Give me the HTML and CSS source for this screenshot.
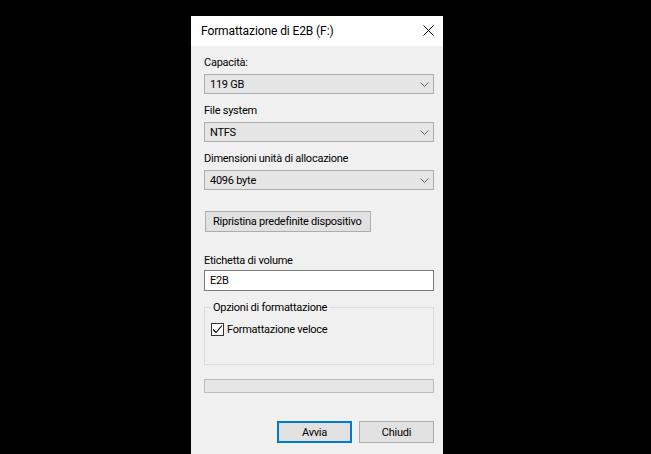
FILE: index.html
```html
<!DOCTYPE html>
<html lang="it">
<head>
<meta charset="utf-8">
<title>Formattazione di E2B (F:)</title>
<link rel="stylesheet" href="styles.css">
</head>
<body>
<div class="window">
  <div class="titlebar">
    <span class="title">Formattazione di E2B (F:)</span>
    <svg class="close" width="11" height="11" viewBox="0 0 11 11"><path d="M0.5 0.5 L10.5 10.5 M10.5 0.5 L0.5 10.5" stroke="#000" stroke-width="1" fill="none"/></svg>
  </div>
  <div class="content">
    <div class="field">
      <div class="label">Capacità:</div>
      <div class="combo"><span>119 GB</span><svg class="chev" width="9" height="5" viewBox="0 0 9 5"><path d="M0.5 0.5 L4.5 4.5 L8.5 0.5" stroke="#606060" stroke-width="1" fill="none"/></svg></div>
    </div>
    <div class="field">
      <div class="label">File system</div>
      <div class="combo"><span>NTFS</span><svg class="chev" width="9" height="5" viewBox="0 0 9 5"><path d="M0.5 0.5 L4.5 4.5 L8.5 0.5" stroke="#606060" stroke-width="1" fill="none"/></svg></div>
    </div>
    <div class="field">
      <div class="label">Dimensioni unità di allocazione</div>
      <div class="combo"><span>4096 byte</span><svg class="chev" width="9" height="5" viewBox="0 0 9 5"><path d="M0.5 0.5 L4.5 4.5 L8.5 0.5" stroke="#606060" stroke-width="1" fill="none"/></svg></div>
    </div>
    <button class="btn reset" type="button">Ripristina predefinite dispositivo</button>
    <div class="label volume-label">Etichetta di volume</div>
    <div class="textbox">E2B</div>
    <fieldset class="group">
      <legend>Opzioni di formattazione</legend>
      <div class="check">
        <span class="box"><svg width="11" height="11" viewBox="0 0 11 11"><path d="M1 5.5 L4 8.5 L10 1.5" stroke="#000" stroke-width="1.1" fill="none"/></svg></span>
        <span>Formattazione veloce</span>
      </div>
    </fieldset>
    <div class="progress"></div>
    <div class="actions">
      <button class="btn default" type="button">Avvia</button>
      <button class="btn" type="button">Chiudi</button>
    </div>
  </div>
</div>
</body>
</html>
```
FILE: styles.css
```css
html, body {
  margin: 0;
  padding: 0;
  background: #000;
  overflow: hidden;
}
body {
  font-family: Roboto, "Noto Sans", sans-serif;
  font-size: 11px;
  letter-spacing: -0.25px;
  color: #000;
}
.window {
  margin: 16px 0 0 191px;
  width: 252px;
  height: 450px;
  background: #f0f0f0;
}
.titlebar {
  height: 30px;
  background: #fff;
  display: flex;
  align-items: center;
  padding: 0 9px 0 10px;
}
.title {
  flex: 1;
  line-height: 15px;
  font-size: 12px;
  letter-spacing: -0.1px;
}
.close {
  display: block;
  margin-top: -1px;
}
.content {
  padding: 9px 9px 0 13px;
}
.field + .field {
  margin-top: 9px;
}
.label {
  line-height: 15px;
  white-space: nowrap;
}
.combo {
  margin-top: 4px;
  height: 18px;
  border: 1px solid #adadad;
  background: #e5e5e5;
  display: flex;
  align-items: center;
  padding: 0 4px 0 5px;
  line-height: 15px;
}
.combo span {
  flex: 1;
}
.chev {
  display: block;
}
.btn {
  font-family: inherit;
  font-size: 11px;
  letter-spacing: -0.25px;
  color: #000;
  background: #e1e1e1;
  border: 1px solid #adadad;
  height: 21px;
  line-height: 15px;
  padding: 0 6px;
  margin: 0;
}
.reset {
  display: block;
  margin-top: 21px;
  margin-left: 1px;
  padding: 0 8px 0 7px;
}
.volume-label {
  margin-top: 21px;
}
.textbox {
  margin-top: 2px;
  height: 19px;
  border: 1px solid #7a7a7a;
  background: #fff;
  padding: 0 5px;
  line-height: 19px;
}
.group {
  margin: 9px 0 0 0;
  border: 1px solid #dcdcdc;
  padding: 0 6px 27px 6px;
  min-width: 0;
}
.group legend {
  padding: 0 2px;
  line-height: 15px;
}
.check {
  margin-top: 7px;
  height: 15px;
  display: flex;
  align-items: center;
  gap: 3px;
  line-height: 15px;
}
.box {
  width: 11px;
  height: 11px;
  border: 1px solid #333;
  background: #fff;
  display: flex;
}
.box svg {
  display: block;
}
.progress {
  margin-top: 14px;
  height: 12px;
  border: 1px solid #bcbcbc;
  background: #e6e6e6;
}
.actions {
  margin-top: 28px;
  display: flex;
  justify-content: flex-end;
  gap: 7px;
}
.actions .btn {
  width: 75px;
  height: 22px;
}
.btn.default {
  border: 2px solid #0078d7;
}
```
